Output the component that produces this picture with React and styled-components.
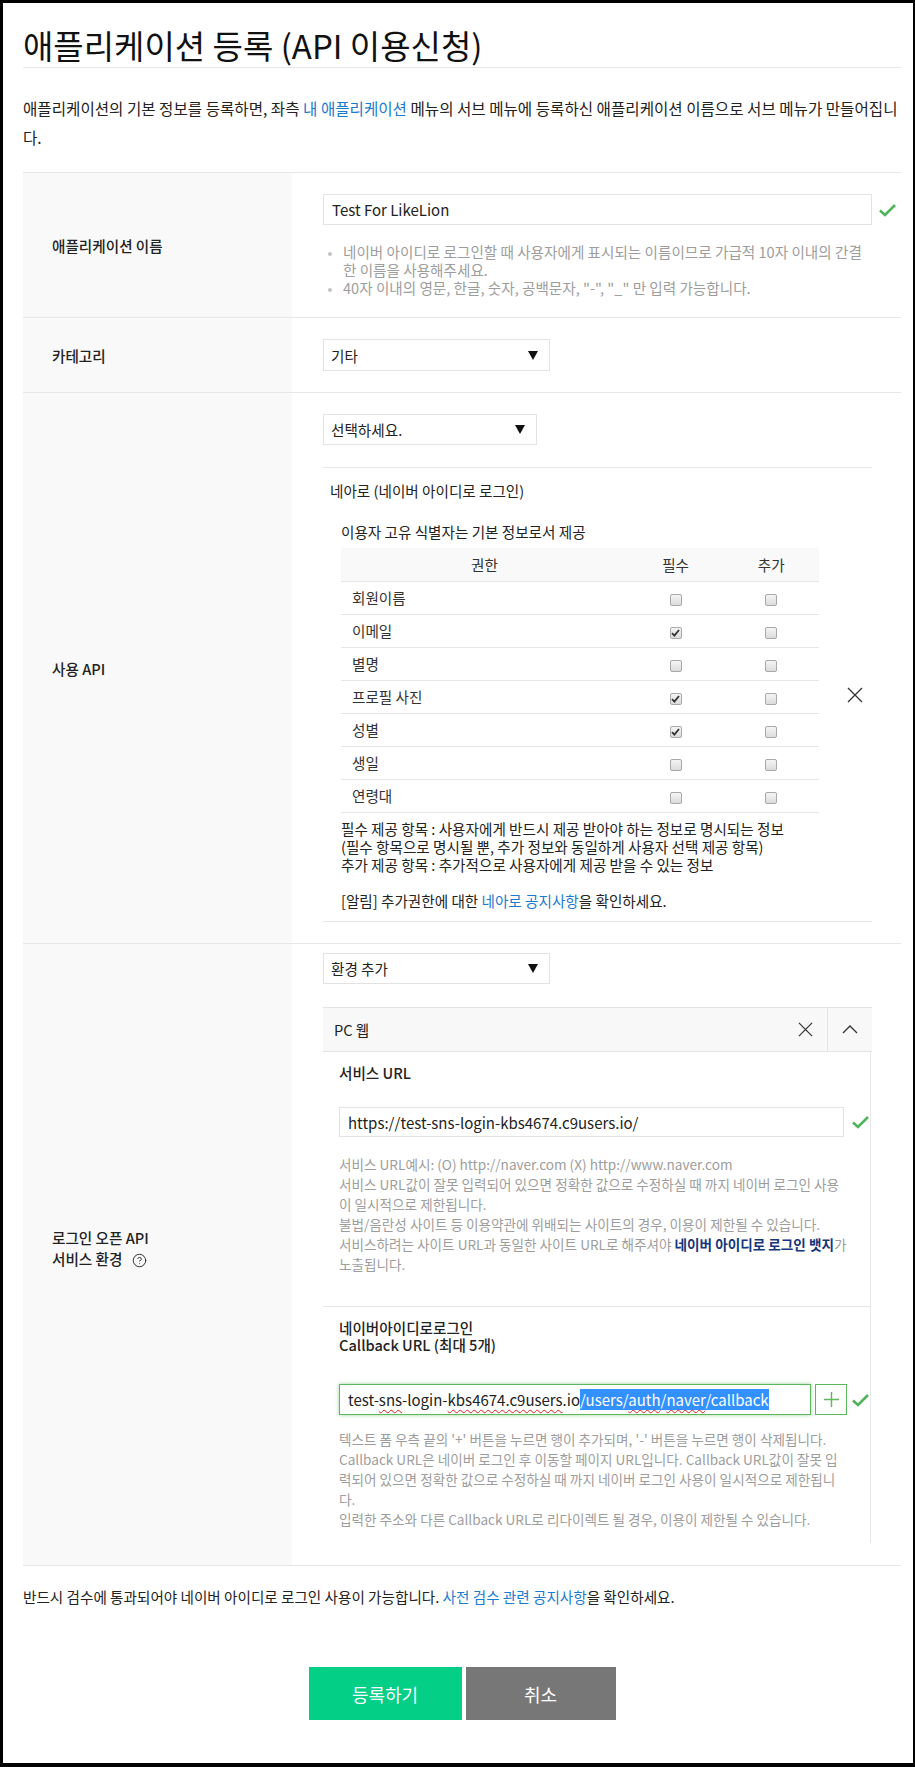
import React from "react";
import styled, { createGlobalStyle } from "styled-components";
import { CircleHelp } from "lucide-react";

const GlobalStyle = createGlobalStyle`
  html, body {
    margin: 0;
    padding: 0;
    background: #fff;
  }
  body {
    font-family: "Noto Sans CJK KR", "Noto Sans", sans-serif;
    color: #333;
  }
`;

const Frame = styled.div`
  box-sizing: border-box;
  width: 915px;
  height: 1767px;
  border: 3px solid #000;
  border-right-width: 2px;
  border-bottom-width: 4px;
  padding: 20px 12px 0 20px;
`;

const Title = styled.h2`
  margin: 0;
  font-size: 33px;
  font-weight: 400;
  line-height: 44px;
  color: #111;
  border-bottom: 1px solid #e6e6e6;
`;

const Intro = styled.p`
  margin: 26px 0 20px;
  font-size: 15.6px;
  line-height: 29px;
  color: #222;
`;

const Link = styled.a`
  color: ${({ $strong }) => ($strong ? "#16357a" : "#1a7bd0")};
  font-weight: ${({ $strong }) => ($strong ? 700 : 400)};
  text-decoration: none;
`;

const FormTable = styled.div`
  border-top: 1px solid #e6e6e6;
`;

const Row = styled.div`
  display: grid;
  grid-template-columns: 269px 1fr;
  border-bottom: 1px solid #e6e6e6;
`;

const Label = styled.div`
  display: flex;
  align-items: center;
  padding: 0 0 ${({ $lift }) => $lift || 0}px 29px;
  background: #f9f9f9;
  font-size: 14.6px;
  font-weight: 500;
  line-height: 21px;
  color: #222;
`;

const HelpMark = styled(CircleHelp)`
  margin-left: 10px;
  vertical-align: -3px;
`;

const Field = styled.div`
  padding: ${({ $top }) => $top}px 0 ${({ $bottom }) => $bottom}px 31px;
`;

const InputLine = styled.div`
  display: flex;
  align-items: center;
  gap: ${({ $gap }) => $gap || 4}px;
`;

const TextBox = styled.div`
  box-sizing: border-box;
  display: flex;
  align-items: center;
  width: ${({ $w }) => $w}px;
  height: ${({ $h }) => $h || 31}px;
  padding: 0 8px;
  border: 1px solid ${({ $focus }) => ($focus ? "#5cb85c" : "#e3e3e3")};
  box-shadow: ${({ $focus }) => ($focus ? "0 0 4px rgba(92, 184, 92, 0.6)" : "none")};
  background: #fff;
  font-size: 15px;
  color: #222;
  white-space: nowrap;
  overflow: hidden;
`;

const Typo = styled.span`
  text-decoration: underline wavy #e02020;
  text-decoration-thickness: 1px;
  text-underline-offset: 3px;
`;

const Selected = styled.span`
  background: #3390ff;
  color: #fff;
`;

const PlusButton = styled.div`
  box-sizing: border-box;
  display: flex;
  align-items: center;
  justify-content: center;
  width: 32px;
  height: 31px;
  border: 1px solid #5cb85c;
  background: #fff;
`;

const Select = styled.div`
  box-sizing: border-box;
  display: flex;
  align-items: center;
  justify-content: space-between;
  width: ${({ $w }) => $w}px;
  height: ${({ $h }) => $h || 31}px;
  padding: 0 11px 0 7px;
  border: 1px solid #e3e3e3;
  background: #fff;
  font-size: 14.6px;
  color: #222;
`;

const Hints = styled.ul`
  width: 525px;
  margin: 18px 0 0;
  padding: 0 0 0 20px;
  font-size: 14.6px;
  line-height: 18px;
  color: #9d9d9d;

  li::marker {
    color: #c4c4c4;
    font-size: 11px;
  }
`;

const ApiBlock = styled.div`
  display: flex;
  align-items: center;
  width: 549px;
  margin-top: 22px;
  border-top: 1px solid #e6e6e6;
  border-bottom: 1px solid #e6e6e6;
`;

const ApiBody = styled.div`
  flex: 1;
  padding: 13px 0 11px 7px;
  font-size: 14.6px;
  line-height: 20px;
  color: #222;
`;

const Indent = styled.div`
  margin-top: ${({ $top }) => $top || 0}px;
  padding-left: 11px;
  line-height: ${({ $lh }) => $lh || 20}px;
`;

const CloseSlot = styled.div`
  display: flex;
  align-items: center;
  justify-content: center;
  width: 34px;
`;

const Scopes = styled.table`
  width: 478px;
  margin: 6px 0 0 11px;
  border-collapse: collapse;
  font-size: 14.6px;
  color: #333;

  th {
    height: 33px;
    padding: 0;
    background: #f9f9f9;
    font-weight: 400;
    border-bottom: 1px solid #e6e6e6;
  }

  td {
    height: 32px;
    padding: 0;
    border-bottom: 1px solid #e6e6e6;
    text-align: center;
  }

  td:first-child {
    padding-left: 11px;
    text-align: left;
  }
`;

const Box = styled.span`
  box-sizing: border-box;
  display: inline-flex;
  align-items: center;
  justify-content: center;
  width: 12px;
  height: 12px;
  vertical-align: middle;
  border: 1px solid #a9a9a9;
  border-radius: 2px;
  background: linear-gradient(#f5f5f5, #dcdcdc);
`;

const Panel = styled.div`
  width: 549px;
  margin-top: 23px;
`;

const PanelHead = styled.div`
  display: flex;
  height: 43px;
  border-top: 1px solid #e3e3e3;
  border-bottom: 1px solid #e3e3e3;
  background: #f8f8f8;
`;

const PanelTitle = styled.div`
  flex: 1;
  display: flex;
  align-items: center;
  padding-left: 11px;
  font-size: 14.6px;
  color: #222;
`;

const HeadButton = styled.div`
  display: flex;
  align-items: center;
  justify-content: center;
  width: 44px;
  border-left: 1px solid ${({ $divider }) => ($divider ? "#e3e3e3" : "transparent")};
`;

const PanelBody = styled.div`
  margin-right: 1px;
  border-right: 1px solid #e8e8e8;
  overflow: hidden;
`;

const PanelSection = styled.div`
  padding: ${({ $top }) => $top}px 0 ${({ $bottom }) => $bottom}px 16px;
  border-bottom: 1px solid ${({ $last }) => ($last ? "transparent" : "#e6e6e6")};
`;

const SectionTitle = styled.div`
  margin-bottom: ${({ $gap }) => $gap}px;
  font-size: 14.6px;
  font-weight: 500;
  line-height: ${({ $lh }) => $lh}px;
  color: #222;
`;

const Guide = styled.p`
  width: 530px;
  margin: ${({ $top }) => $top}px 0 0;
  font-size: 13.6px;
  line-height: 20px;
  color: #9d9d9d;
`;

const Notice = styled.p`
  margin: 21px 0 60px;
  font-size: 14.6px;
  line-height: 20px;
  color: #222;
`;

const Actions = styled.div`
  display: flex;
  justify-content: center;
  gap: 4px;
`;

const ActionButton = styled.button`
  width: ${({ $w }) => $w}px;
  height: 53px;
  border: 0;
  background: ${({ $primary }) => ($primary ? "#03cf86" : "#777777")};
  color: #fff;
  font-family: inherit;
  font-size: 18px;
`;

function Check() {
  return (
    <svg width="19" height="14" viewBox="0 0 19 14" style={{ flex: "none" }}>
      <path d="M2 7.5 L7 12 L17 2" fill="none" stroke="#4fb45a" strokeWidth="2.6" />
    </svg>
  );
}

function Cross({ size = 16 }) {
  return (
    <svg width={size} height={size} viewBox="0 0 16 16">
      <path d="M1 1 L15 15 M15 1 L1 15" stroke="#333" strokeWidth="1.3" fill="none" />
    </svg>
  );
}

function ChevronUp() {
  return (
    <svg width="16" height="9" viewBox="0 0 16 9">
      <path d="M1 8 L8 1 L15 8" stroke="#333" strokeWidth="1.3" fill="none" />
    </svg>
  );
}

function Arrow() {
  return (
    <svg width="10" height="9" viewBox="0 0 10 9">
      <polygon points="0,0 10,0 5,9" fill="#111" />
    </svg>
  );
}

function Plus() {
  return (
    <svg width="15" height="15" viewBox="0 0 15 15">
      <path d="M7.5 0 V15 M0 7.5 H15" stroke="#5cb85c" strokeWidth="1.4" />
    </svg>
  );
}

function Checkbox({ checked }) {
  return (
    <Box>
      {checked && (
        <svg width="9" height="8" viewBox="0 0 9 8">
          <path d="M1 4.2 L3.4 6.6 L8 1" stroke="#333" strokeWidth="1.8" fill="none" />
        </svg>
      )}
    </Box>
  );
}

const scopes = [
  { name: "회원이름", required: false },
  { name: "이메일", required: true },
  { name: "별명", required: false },
  { name: "프로필 사진", required: true },
  { name: "성별", required: true },
  { name: "생일", required: false },
  { name: "연령대", required: false }
];

function App() {
  return (
    <>
      <GlobalStyle />
      <Frame>
        <Title>애플리케이션 등록 (API 이용신청)</Title>
        <Intro>
          애플리케이션의 기본 정보를 등록하면, 좌측 <Link>내 애플리케이션</Link> 메뉴의 서브 메뉴에
          등록하신 애플리케이션 이름으로 서브 메뉴가 만들어집니다.
        </Intro>

        <FormTable>
          <Row>
            <Label>애플리케이션 이름</Label>
            <Field $top={21} $bottom={20}>
              <InputLine $gap={6}>
                <TextBox $w={549}>Test For LikeLion</TextBox>
                <Check />
              </InputLine>
              <Hints>
                <li>
                  네이버 아이디로 로그인할 때 사용자에게 표시되는 이름이므로 가급적 10자 이내의
                  간결한 이름을 사용해주세요.
                </li>
                <li>40자 이내의 영문, 한글, 숫자, 공백문자, "-", "_" 만 입력 가능합니다.</li>
              </Hints>
            </Field>
          </Row>

          <Row>
            <Label>카테고리</Label>
            <Field $top={21} $bottom={21}>
              <Select $w={227} $h={32}>
                기타
                <Arrow />
              </Select>
            </Field>
          </Row>

          <Row>
            <Label>사용 API</Label>
            <Field $top={21} $bottom={21}>
              <Select $w={214}>
                선택하세요.
                <Arrow />
              </Select>
              <ApiBlock>
                <ApiBody>
                  <div>네아로 (네이버 아이디로 로그인)</div>
                  <Indent $top={21}>이용자 고유 식별자는 기본 정보로서 제공</Indent>
                  <Scopes>
                    <colgroup>
                      <col style={{ width: "60%" }} />
                      <col style={{ width: "20%" }} />
                      <col style={{ width: "20%" }} />
                    </colgroup>
                    <thead>
                      <tr>
                        <th>권한</th>
                        <th>필수</th>
                        <th>추가</th>
                      </tr>
                    </thead>
                    <tbody>
                      {scopes.map((scope) => (
                        <tr key={scope.name}>
                          <td>{scope.name}</td>
                          <td>
                            <Checkbox checked={scope.required} />
                          </td>
                          <td>
                            <Checkbox />
                          </td>
                        </tr>
                      ))}
                    </tbody>
                  </Scopes>
                  <Indent $top={7} $lh={18}>
                    필수 제공 항목 : 사용자에게 반드시 제공 받아야 하는 정보로 명시되는 정보
                    <br />
                    (필수 항목으로 명시될 뿐, 추가 정보와 동일하게 사용자 선택 제공 항목)
                    <br />
                    추가 제공 항목 : 추가적으로 사용자에게 제공 받을 수 있는 정보
                    <br />
                    <br />
                    [알림] 추가권한에 대한 <Link>네아로 공지사항</Link>을 확인하세요.
                  </Indent>
                </ApiBody>
                <CloseSlot>
                  <Cross />
                </CloseSlot>
              </ApiBlock>
            </Field>
          </Row>

          <Row>
            <Label $lift={14}>
              <span>
                로그인 오픈 API
                <br />
                서비스 환경
                <HelpMark size={15} strokeWidth={1.6} color="#333" />
              </span>
            </Label>
            <Field $top={9} $bottom={22}>
              <Select $w={227}>
                환경 추가
                <Arrow />
              </Select>
              <Panel>
                <PanelHead>
                  <PanelTitle>PC 웹</PanelTitle>
                  <HeadButton>
                    <Cross size={15} />
                  </HeadButton>
                  <HeadButton $divider>
                    <ChevronUp />
                  </HeadButton>
                </PanelHead>
                <PanelBody>
                  <PanelSection $top={11} $bottom={32}>
                    <SectionTitle $lh={20} $gap={24}>
                      서비스 URL
                    </SectionTitle>
                    <InputLine $gap={7}>
                      <TextBox $w={510} $h={30}>
                        https://test-sns-login-kbs4674.c9users.io/
                      </TextBox>
                      <Check />
                    </InputLine>
                    <Guide $top={17}>
                      서비스 URL예시: (O) http://naver.com (X) http://www.naver.com
                      <br />
                      서비스 URL값이 잘못 입력되어 있으면 정확한 값으로 수정하실 때 까지 네이버 로그인 사용
                      <br />이 일시적으로 제한됩니다.
                      <br />
                      불법/음란성 사이트 등 이용약관에 위배되는 사이트의 경우, 이용이 제한될 수 있습니다.
                      <br />
                      서비스하려는 사이트 URL과 동일한 사이트 URL로 해주셔야{" "}
                      <Link $strong>네이버 아이디로 로그인 뱃지</Link>가
                      <br />
                      노출됩니다.
                    </Guide>
                  </PanelSection>
                  <PanelSection $top={12} $bottom={13} $last>
                    <SectionTitle $lh={17} $gap={31}>
                      네이버아이디로로그인
                      <br />
                      Callback URL (최대 5개)
                    </SectionTitle>
                    <InputLine $gap={4}>
                      <TextBox $w={474} $focus>
                        test-<Typo>sns</Typo>-login-<Typo>kbs4674.c9users</Typo>.io
                        <Selected>
                          /users/<Typo>auth</Typo>/<Typo>naver</Typo>/callback
                        </Selected>
                      </TextBox>
                      <PlusButton>
                        <Plus />
                      </PlusButton>
                      <Check />
                    </InputLine>
                    <Guide $top={14}>
                      텍스트 폼 우측 끝의 '+' 버튼을 누르면 행이 추가되며, '-' 버튼을 누르면 행이 삭제됩니다.
                      <br />
                      Callback URL은 네이버 로그인 후 이동할 페이지 URL입니다. Callback URL값이 잘못 입
                      <br />
                      력되어 있으면 정확한 값으로 수정하실 때 까지 네이버 로그인 사용이 일시적으로 제한됩니
                      <br />
                      다.
                      <br />
                      입력한 주소와 다른 Callback URL로 리다이렉트 될 경우, 이용이 제한될 수 있습니다.
                    </Guide>
                  </PanelSection>
                </PanelBody>
              </Panel>
            </Field>
          </Row>
        </FormTable>

        <Notice>
          반드시 검수에 통과되어야 네이버 아이디로 로그인 사용이 가능합니다.{" "}
          <Link>사전 검수 관련 공지사항</Link>을 확인하세요.
        </Notice>

        <Actions>
          <ActionButton $primary $w={153}>
            등록하기
          </ActionButton>
          <ActionButton $w={150}>취소</ActionButton>
        </Actions>
      </Frame>
    </>
  );
}

export default App;
